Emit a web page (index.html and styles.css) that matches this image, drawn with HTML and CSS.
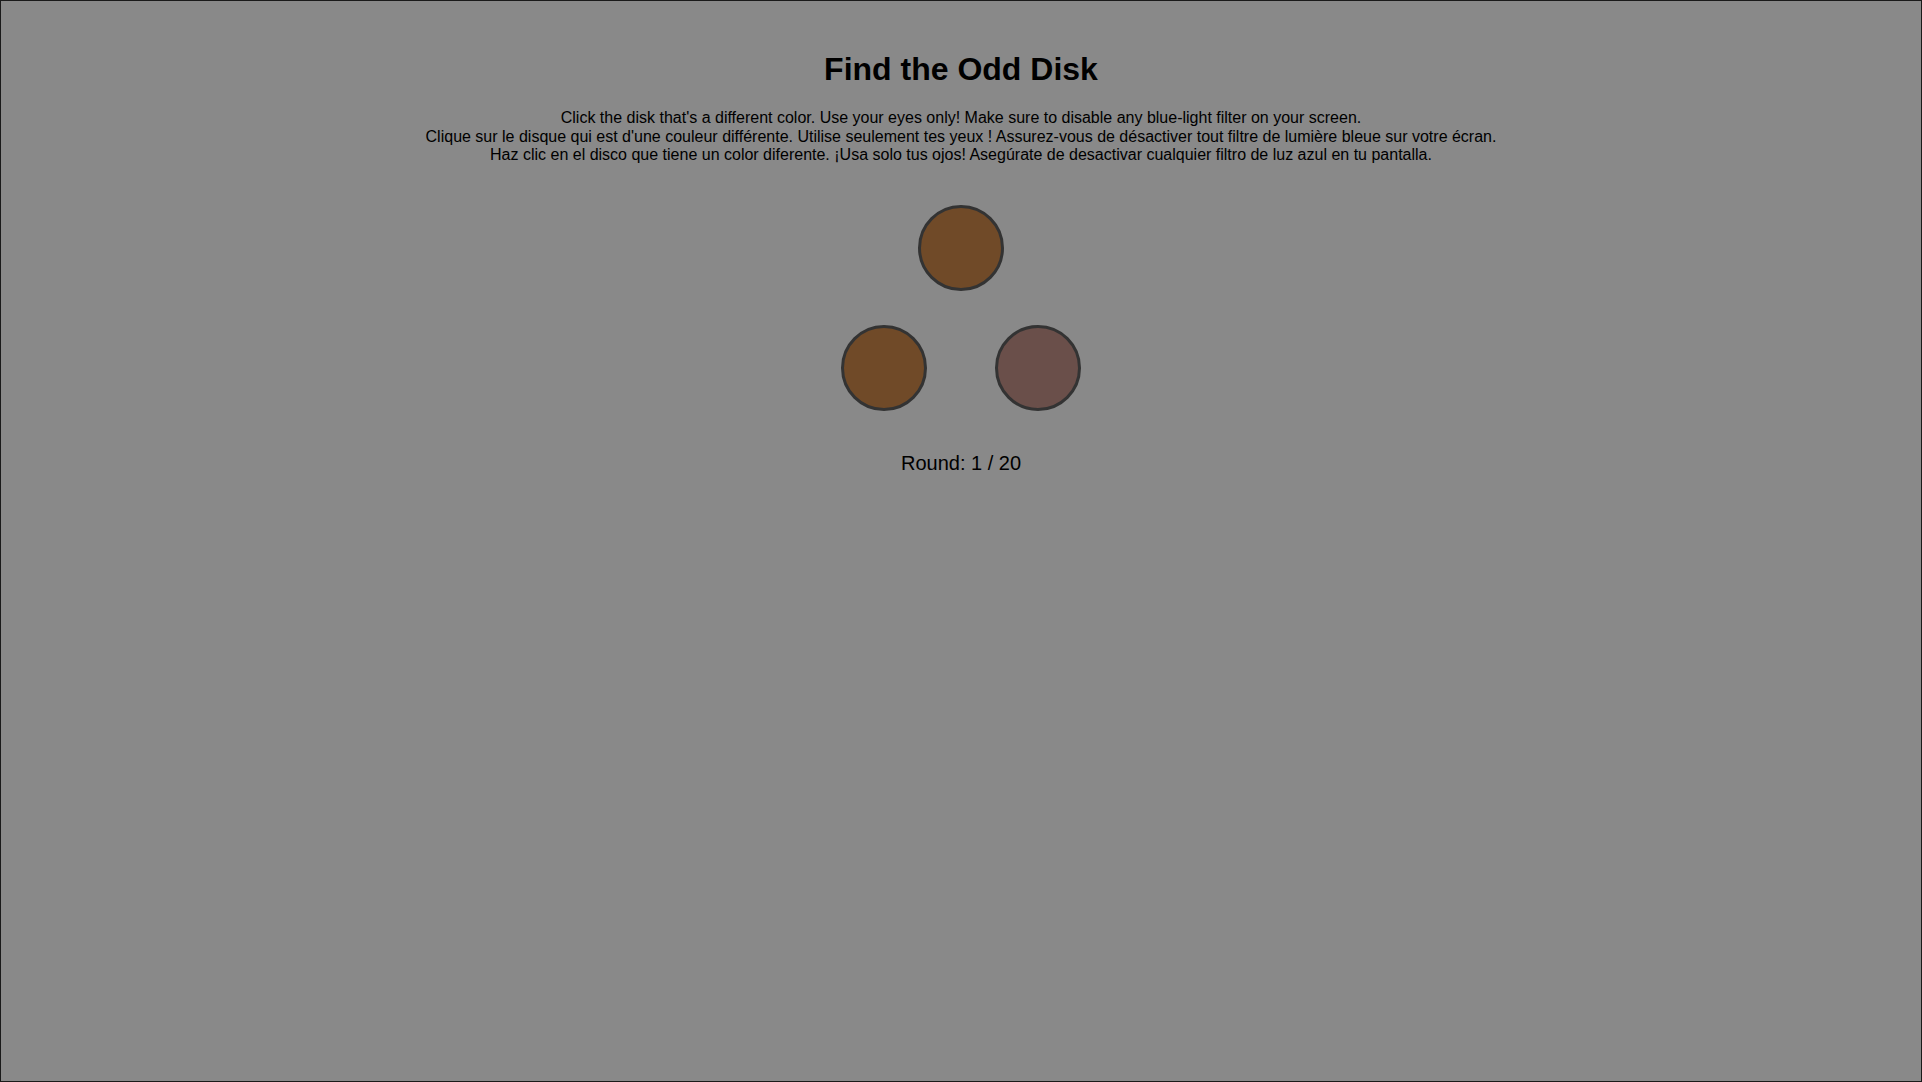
FILE: index.html
```html
<!DOCTYPE html>
<html lang="en">
<head>
<meta charset="utf-8">
<title>Find the Odd Disk</title>
<link rel="stylesheet" href="styles.css">
</head>
<body>
<div class="frame">
  <h1 class="title">Find the Odd Disk</h1>
  <p class="intro">Click the disk that's a different color. Use your eyes only! Make sure to disable any blue-light filter on your screen.<br>Clique sur le disque qui est d'une couleur différente. Utilise seulement tes yeux ! Assurez-vous de désactiver tout filtre de lumière bleue sur votre écran.<br>Haz clic en el disco que tiene un color diferente. ¡Usa solo tus ojos! Asegúrate de desactivar cualquier filtro de luz azul en tu pantalla.</p>
  <div class="disks">
    <div class="disk-row">
      <div class="disk"></div>
    </div>
    <div class="disk-row bottom">
      <div class="disk"></div>
      <div class="disk odd"></div>
    </div>
  </div>
  <div class="round">Round: 1 / 20</div>
</div>
</body>
</html>
```
FILE: styles.css
```css
html {
  background: #898989;
}
body {
  margin: 0;
  font-family: "Liberation Sans", Arial, sans-serif;
  color: #000;
}
.frame {
  box-sizing: border-box;
  height: 1082px;
  border: 1px solid #1a1a1a;
  padding-top: 29px;
  text-align: center;
}
.title {
  font-size: 32px;
  font-weight: bold;
  margin: 21px 0 21px;
  line-height: 37px;
}
.intro {
  font-size: 16px;
  margin: 0;
  line-height: 18.5px;
}
.disks {
  display: flex;
  flex-direction: column;
  align-items: center;
  gap: 34px;
  margin-top: 40px;
}
.disk-row {
  display: flex;
  gap: 68px;
  justify-content: center;
}
.disk {
  box-sizing: border-box;
  width: 86px;
  height: 86px;
  border-radius: 50%;
  border: 3px solid #333;
  background: #704a28;
}
.disk.odd {
  background: #6a4f4a;
}
.round {
  font-size: 20px;
  line-height: 23px;
  margin-top: 41px;
}
```
